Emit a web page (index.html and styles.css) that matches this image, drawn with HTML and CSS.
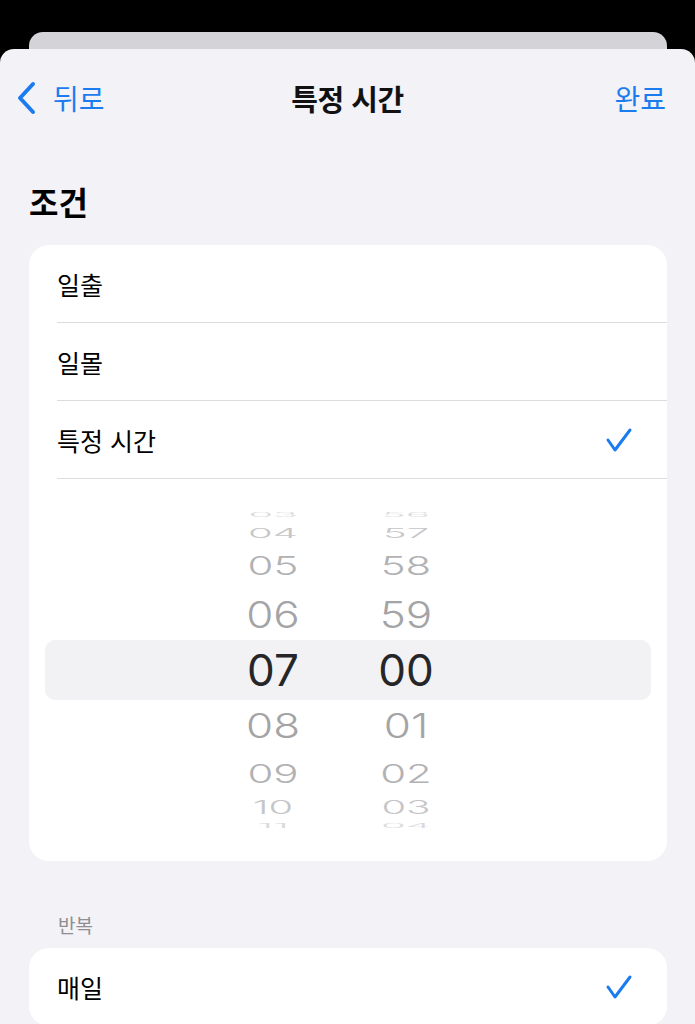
FILE: index.html
```html
<!DOCTYPE html>
<html lang="ko">
<head>
<meta charset="utf-8">
<link rel="stylesheet" href="styles.css">
</head>
<body>
<div class="backcard"></div>
<div class="sheet">
  <header class="nav">
    <div class="back">
      <svg class="chev" width="22" height="34" viewBox="0 0 22 34"><path d="M18 3 L5 17 L18 31" fill="none" stroke="#1b7cf0" stroke-width="4" stroke-linecap="round" stroke-linejoin="round"/></svg>
      <span>뒤로</span>
    </div>
    <div class="title">특정 시간</div>
    <div class="done">완료</div>
  </header>

  <h1 class="heading">조건</h1>

  <section class="card">
    <div class="row"><span>일출</span></div>
    <div class="row"><span>일몰</span></div>
    <div class="row"><span>특정 시간</span>
      <svg class="check" width="28" height="26" viewBox="0 0 28 26"><path d="M3 13 L10 23 L25 3" fill="none" stroke="#1b7cf0" stroke-width="3" stroke-linecap="round" stroke-linejoin="round"/></svg>
    </div>
    <div class="picker">
      <div class="prow p4"><span class="cell">03</span><span class="cell">56</span></div>
      <div class="prow p3"><span class="cell">04</span><span class="cell">57</span></div>
      <div class="prow p2"><span class="cell">05</span><span class="cell">58</span></div>
      <div class="prow p1"><span class="cell">06</span><span class="cell">59</span></div>
      <div class="prow p0"><span class="cell">07</span><span class="cell">00</span></div>
      <div class="prow p1b"><span class="cell">08</span><span class="cell">01</span></div>
      <div class="prow p2b"><span class="cell">09</span><span class="cell">02</span></div>
      <div class="prow p3b"><span class="cell">10</span><span class="cell">03</span></div>
      <div class="prow p4b"><span class="cell">11</span><span class="cell">04</span></div>
    </div>
  </section>

  <div class="label">반복</div>
  <section class="card">
    <div class="row last"><span>매일</span>
      <svg class="check" width="28" height="26" viewBox="0 0 28 26"><path d="M3 13 L10 23 L25 3" fill="none" stroke="#1b7cf0" stroke-width="3" stroke-linecap="round" stroke-linejoin="round"/></svg>
    </div>
  </section>
</div>
</body>
</html>
```
FILE: styles.css
```css
* { box-sizing: border-box; }
html, body {
  margin: 0;
  padding: 0;
  background: #000;
  width: 695px;
  height: 1024px;
  overflow: hidden;
  font-family: "Noto Sans CJK KR", "Noto Sans", sans-serif;
  color: #000;
}
.backcard {
  margin: 32px 28px 0 29px;
  height: 17px;
  background: #d3d3d8;
  border-radius: 14px 14px 0 0;
}
.sheet {
  background: #f2f2f7;
  border-radius: 14px 14px 0 0;
  height: 975px;
  overflow: hidden;
}
.nav {
  height: 98px;
  display: grid;
  grid-template-columns: 1fr auto 1fr;
  align-items: center;
  padding: 0 29px;
}
.back {
  display: flex;
  align-items: center;
  gap: 16px;
  margin-left: -14px;
  color: #1b7cf0;
  font-size: 28px;
}
.chev { display: block; }
.title {
  font-size: 29px;
  font-weight: 700;
  letter-spacing: -0.5px;
  color: #111;
}
.done {
  justify-self: end;
  color: #1b7cf0;
  font-size: 28px;
}
.heading {
  margin: 34px 0 0 29px;
  font-size: 32px;
  line-height: 40px;
  font-weight: 700;
}
.card {
  margin: 24px 28px 0 29px;
  background: #fff;
  border-radius: 20px;
  overflow: hidden;
}
.row {
  height: 78px;
  margin-left: 28px;
  padding-right: 34px;
  border-bottom: 1px solid #dcdce0;
  display: flex;
  align-items: center;
  justify-content: space-between;
  font-size: 25px;
}
.row.last { border-bottom: none; }
.check { display: block; }
.picker {
  height: 382px;
  display: flex;
  flex-direction: column;
  justify-content: center;
  font-family: Inter, "Noto Sans", sans-serif;
  font-size: 44px;
  font-weight: 300;
}
.prow {
  margin: 0 16px;
  display: flex;
  align-items: center;
  padding-left: 188px;
  gap: 53px;
}
.cell {
  width: 80px;
  text-align: center;
  line-height: 1;
  display: block;
}
.p0 {
  height: 60px;
  background: #f2f2f4;
  border-radius: 10px;
  color: #262628;
  font-weight: 400;
}
.p1, .p1b { height: 52px; color: #a4a4a6; }
.p1 .cell { transform: scaleY(0.85); }
.p1b .cell { transform: scaleY(0.78); }
.p2, .p2b { height: 44px; color: #b2b2b4; font-size: 42px; }
.p2 .cell, .p2b .cell { transform: scaleY(0.62); }
.p3, .p3b { height: 23px; color: #c6c6c8; font-size: 40px; }
.p3 .cell { transform: scaleY(0.34); }
.p3b .cell { transform: scaleY(0.45); }
.p4, .p4b { height: 13px; color: #dadadc; font-size: 40px; }
.p4 .cell, .p4b .cell { transform: scaleY(0.14); }
.label {
  margin: 52px 0 0 58px;
  font-size: 19px;
  line-height: 24px;
  color: #8e8e93;
}
.card + .label + .card { margin-top: 11px; }
```
